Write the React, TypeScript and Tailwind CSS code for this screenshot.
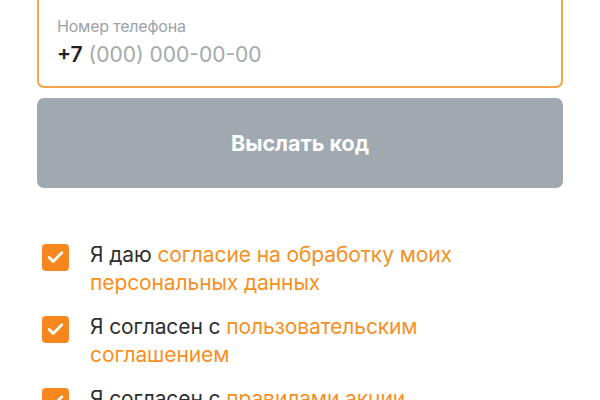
import { Check } from "lucide-react";

type Agreement = { lead: string; link: string };

const agreements: Agreement[] = [
  { lead: "Я даю", link: "согласие на обработку моих персональных данных" },
  { lead: "Я согласен с", link: "пользовательским соглашением" },
  { lead: "Я согласен с", link: "правилами акции" },
];

export default function App() {
  return (
    <div
      className="w-[600px] h-[400px] overflow-hidden bg-white"
      style={{ fontFamily: "Inter, 'Noto Sans', sans-serif" }}
    >
      <div className="px-[37px] -mt-[6px]">
        <div className="h-[94px] rounded-[7px] border-2 border-[#f6a445] px-[18px] pt-[20px]">
          <div className="text-[16px] leading-[20px] tracking-[-0.2px] text-[#9ca1a7]">Номер телефона</div>
          <div className="mt-[5px] text-[21px] leading-[28px] text-[#a4a9ae]">
            <span className="font-semibold text-[#1f2124]">+7</span> (000) 000-00-00
          </div>
        </div>

        <button className="mt-[10px] w-full h-[90px] rounded-[7px] bg-[#a0a8b0] text-white text-[21.5px] font-bold">
          Выслать код
        </button>

        <div className="mt-[56px] flex flex-col gap-[19px] pl-[5px]">
          {agreements.map((a, i) => (
            <div key={i} className="flex items-start gap-[21px]">
              <div className="w-[27px] h-[27px] shrink-0 rounded-[4px] bg-[#f7861f] flex items-center justify-center">
                <Check className="w-[19px] h-[19px] text-white" strokeWidth={3.5} />
              </div>
              <p className="-mt-[3px] w-[445px] text-[21px] leading-[28px] tracking-[-0.1px] text-[#2d2f33]">
                {a.lead} <span className="text-[#f7901f]">{a.link}</span>
              </p>
            </div>
          ))}
        </div>
      </div>
    </div>
  );
}
